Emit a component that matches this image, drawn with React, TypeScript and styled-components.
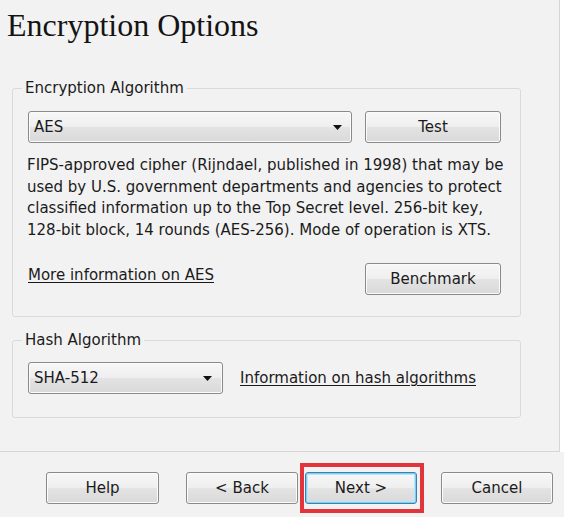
import React from "react";
import styled, { createGlobalStyle } from "styled-components";

const Global = createGlobalStyle`
  html, body { margin: 0; padding: 0; background: #ffffff; }
  body {
    font-family: "DejaVu Sans", Verdana, sans-serif;
    font-size: 15px;
    color: #1b1b1b;
  }
  * { box-sizing: border-box; }
`;

const Window = styled.div`
  width: 564px;
  height: 517px;
  display: flex;
  flex-direction: column;
  background: #ffffff;
  overflow: hidden;
`;

const Content = styled.main`
  width: 560px;
  height: 452px;
  flex: none;
  background: #f2f2f2;
  border-right: 1px solid #d6d6d6;
  border-bottom: 1px solid #d6d6d6;
  padding-top: 7px;
  display: flex;
  flex-direction: column;
`;

const Title = styled.h1`
  margin: 0;
  padding-left: 7px;
  font-family: "Liberation Serif", "Times New Roman", serif;
  font-weight: normal;
  font-size: 32px;
  line-height: 36px;
  color: #141414;
`;

const Group = styled.fieldset<{ $top: number }>`
  margin: ${(p) => p.$top}px 0 0 12px;
  width: 509px;
  padding: 0;
  border: 1px solid #dadada;
  border-radius: 3px;
  min-width: 0;
`;

const Legend = styled.legend`
  margin-left: 9px;
  padding: 0 3px;
  font-size: 15px;
  line-height: 18px;
  color: #1b1b1b;
`;

const GroupBody = styled.div<{ $top: number; $bottom: number }>`
  padding: ${(p) => p.$top}px 19px ${(p) => p.$bottom}px 15px;
  display: flex;
  flex-direction: column;
`;

const Row = styled.div<{ $gap: number; $top?: number; $align?: string }>`
  display: flex;
  align-items: ${(p) => p.$align ?? "center"};
  gap: ${(p) => p.$gap}px;
  margin-top: ${(p) => p.$top ?? 0}px;
`;

const chrome = `
  height: 32px;
  border: 1px solid #8a8a8a;
  border-radius: 3px;
  background: linear-gradient(#f7f7f7 0%, #efefef 48%, #e3e3e3 52%, #d9d9d9 100%);
  box-shadow: inset 0 0 0 1px #fbfbfb;
  font-family: "DejaVu Sans", Verdana, sans-serif;
  font-size: 15px;
  color: #1b1b1b;
`;

const Select = styled.div<{ $width: number; $arrowGap: number }>`
  ${chrome}
  width: ${(p) => p.$width}px;
  flex: none;
  display: flex;
  align-items: center;
  justify-content: space-between;
  padding: 0 ${(p) => p.$arrowGap}px 0 5px;
`;

const Arrow = () => (
  <svg width="9" height="5" viewBox="0 0 9 5" aria-hidden="true">
    <polygon points="0,0 9,0 4.5,5" fill="#111" />
  </svg>
);

const Button = styled.button<{ $width: number; $default?: boolean }>`
  ${chrome}
  width: ${(p) => p.$width}px;
  flex: none;
  padding: 0;
  display: flex;
  align-items: center;
  justify-content: center;
  cursor: default;
  ${(p) =>
    p.$default
      ? `border-color: #3c7fb1; box-shadow: inset 0 0 0 1px #7fcdf0, inset 0 0 0 2px #b8e5f8;`
      : ""}
`;

const Description = styled.p`
  margin: 12px 0 0 -1px;
  line-height: 21.5px;
  white-space: nowrap;
  color: #1b1b1b;
`;

const Link = styled.a<{ $top?: number }>`
  color: #1b1b1b;
  text-decoration: underline;
  text-underline-offset: 2px;
  line-height: 18px;
  margin-top: ${(p) => p.$top ?? 0}px;
  white-space: nowrap;
  cursor: pointer;
`;

const Spacer = styled.div`
  flex: 1;
`;

const Footer = styled.footer`
  flex: 1;
  background: #f2f2f2;
  display: flex;
  align-items: flex-start;
  padding: 20px 0 0 46px;
`;

const NavGroup = styled.div<{ $left: number; $right: number }>`
  display: flex;
  gap: 7px;
  margin: 0 ${(p) => p.$right}px 0 ${(p) => p.$left}px;
`;

const Highlight = styled.div`
  position: relative;
  display: flex;
`;

const Marker = styled.div`
  position: absolute;
  top: -9px;
  bottom: -9px;
  left: -5px;
  right: -7px;
  border: 4px solid #e2343b;
  pointer-events: none;
`;

export default function App() {
  return (
    <>
      <Global />
      <Window>
        <Content>
          <Title>Encryption Options</Title>
          <Group $top={36}>
            <Legend>Encryption Algorithm</Legend>
            <GroupBody $top={14} $bottom={21}>
              <Row $gap={13}>
                <Select $width={324} $arrowGap={9}>
                  <span>AES</span>
                  <Arrow />
                </Select>
                <Button $width={136}>Test</Button>
              </Row>
              <Description>
                FIPS-approved cipher (Rijndael, published in 1998) that may be
                <br />
                used by U.S. government departments and agencies to protect
                <br />
                classified information up to the Top Secret level. 256-bit key,
                <br />
                128-bit block, 14 rounds (AES-256). Mode of operation is XTS.
              </Description>
              <Row $gap={0} $top={22} $align="flex-start">
                <Link $top={3}>More information on AES</Link>
                <Spacer />
                <Button $width={136}>Benchmark</Button>
              </Row>
            </GroupBody>
          </Group>
          <Group $top={14}>
            <Legend>Hash Algorithm</Legend>
            <GroupBody $top={13} $bottom={23}>
              <Row $gap={17}>
                <Select $width={195} $arrowGap={10}>
                  <span>SHA-512</span>
                  <Arrow />
                </Select>
                <Link>Information on hash algorithms</Link>
              </Row>
            </GroupBody>
          </Group>
        </Content>
        <Footer>
          <Button $width={113}>Help</Button>
          <NavGroup $left={27} $right={24}>
            <Button $width={112}>&lt; Back</Button>
            <Highlight>
              <Button $width={112} $default>
                Next &gt;
              </Button>
              <Marker />
            </Highlight>
          </NavGroup>
          <Button $width={112}>Cancel</Button>
        </Footer>
      </Window>
    </>
  );
}
